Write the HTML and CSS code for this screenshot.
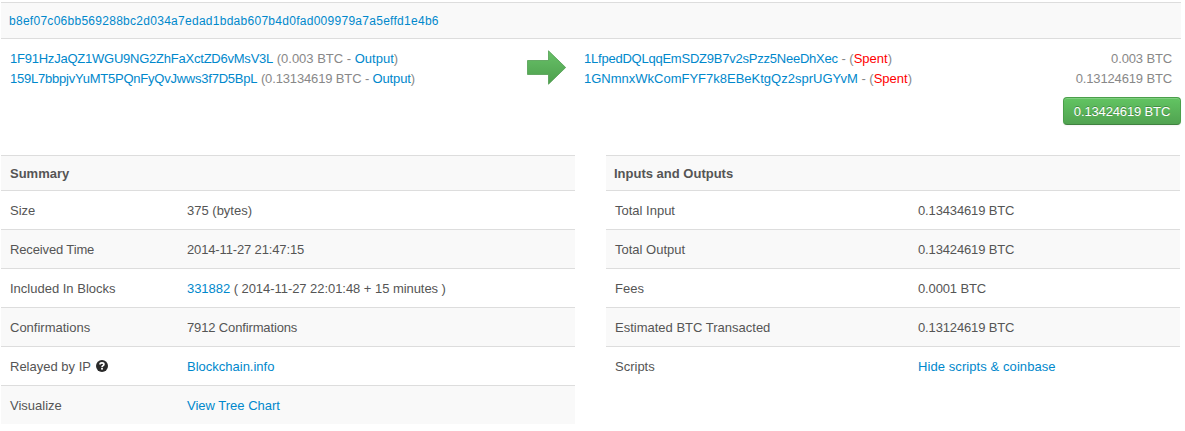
FILE: index.html
```html
<!DOCTYPE html>
<html lang="en">
<head>
<meta charset="utf-8">
<title>Transaction</title>
<link rel="stylesheet" href="styles.css">
</head>
<body>
<main class="page">
  <section class="tx">
    <div class="tx-hash"><a>b8ef07c06bb569288bc2d034a7edad1bdab607b4d0fad009979a7a5effd1e4b6</a></div>
    <div class="tx-body">
      <div class="inputs">
        <div><a class="address">1F91HzJaQZ1WGU9NG2ZhFaXctZD6vMsV3L</a> <span>(0.003 BTC - <a>Output</a>)</span></div>
        <div><a class="address">159L7bbpjvYuMT5PQnFyQvJwws3f7D5BpL</a> <span class="tight">(0.13134619 BTC - <a>Output</a>)</span></div>
      </div>
      <svg class="arrow" width="40" height="36" viewBox="0 0 40 36">
        <defs><linearGradient id="g" x1="0" y1="0" x2="0" y2="1"><stop offset="0" stop-color="#68c168"/><stop offset="1" stop-color="#4d9f4d"/></linearGradient></defs>
        <path d="M.5 10.500H21.500V.8L38.700 17.500 21.500 34.200V24.500H.5Z" fill="url(#g)" stroke="#4c9a4c" stroke-opacity=".75"/>
      </svg>
      <div class="outputs">
        <div class="out"><span><a class="address">1LfpedDQLqqEmSDZ9B7v2sPzz5NeeDhXec</a> - (<b class="spent">Spent</b>)</span><span class="tight">0.003 BTC</span></div>
        <div class="out"><span><a>1GNmnxWkComFYF7k8EBeKtgQz2sprUGYvM</a> - (<b class="spent">Spent</b>)</span><span class="tight">0.13124619 BTC</span></div>
      </div>
    </div>
    <div class="total"><button class="btn">0.13424619 BTC</button></div>
  </section>
  <section class="details">
    <div class="table summary">
      <div class="row head">Summary</div>
      <div class="row"><span>Size</span><span>375 (bytes)</span></div>
      <div class="row odd"><span class="tight">Received Time</span><span class="tight">2014-11-27 21:47:15</span></div>
      <div class="row"><span>Included In Blocks</span><span class="block"><a>331882</a> ( 2014-11-27 22:01:48 + 15 minutes )</span></div>
      <div class="row odd"><span>Confirmations</span><span class="tight">7912 Confirmations</span></div>
      <div class="row"><span>Relayed by IP <svg class="help" width="12" height="12" viewBox="0 0 12 12"><circle cx="6" cy="6" r="6" fill="#2a2a2a"/><path d="M4 4.500Q4.100 2.900 6 2.900T7.900 4.400C7.900 5.700 6 5.600 6 7.200" fill="none" stroke="#fff" stroke-width="1.700"/><rect x="5.100" y="8" width="1.800" height="1.600" fill="#fff"/></svg></span><span><a>Blockchain.info</a></span></div>
      <div class="row odd"><span>Visualize</span><span><a>View Tree Chart</a></span></div>
    </div>
    <div class="table io">
      <div class="row head">Inputs and Outputs</div>
      <div class="row"><span>Total Input</span><span class="tight">0.13434619 BTC</span></div>
      <div class="row odd"><span>Total Output</span><span class="tight">0.13424619 BTC</span></div>
      <div class="row"><span>Fees</span><span class="tight">0.0001 BTC</span></div>
      <div class="row odd"><span>Estimated BTC Transacted</span><span class="tight">0.13124619 BTC</span></div>
      <div class="row"><span>Scripts</span><span class="loose"><a>Hide scripts &amp; coinbase</a></span></div>
    </div>
  </section>
</main>
</body>
</html>
```
FILE: styles.css
```css
* { box-sizing: border-box; }
body { margin: 0; background: #fff; color: #555; font: 13px/20px "Liberation Sans", Arial, sans-serif; }
a { color: #08c; }
.page { width: 1181px; padding: 2px 0 0 1px; }
.tx-hash { height: 37px; padding: 8px; background: #f9f9f9; border-top: 1px solid #ddd; border-bottom: 1px solid #ddd; font-size: 12px; letter-spacing: .275px; }
.tx-body { display: flex; padding-top: 10px; color: #888; height: 48px; }
.inputs { width: 526px; padding-left: 9px; white-space: nowrap; }
.address { letter-spacing: -.23px; }
.tight { letter-spacing: -.14px; }
.loose { letter-spacing: .08px; }
.block { letter-spacing: -.05px; }
.arrow { flex: none; margin-top: 1px; }
.outputs { flex: 1; padding: 0 9px 0 17px; white-space: nowrap; }
.out { display: flex; justify-content: space-between; }
.spent { color: #f00; font-weight: normal; }
.total { display: flex; justify-content: flex-end; padding-top: 10px; }
.btn { width: 118px; height: 28px; padding: 1px 0 0; border: 1px solid #4a9f4a; border-bottom-color: #408140; border-radius: 4px; background: linear-gradient(#62c462, #51a351); box-shadow: inset 0 1px 0 rgba(255,255,255,.2), 0 1px 2px rgba(0,0,0,.05); color: #fff; font: inherit; letter-spacing: -.14px; text-shadow: 0 -1px 0 rgba(0,0,0,.25); }
.details { display: flex; gap: 31px; padding-top: 30px; }
.table { width: 574px; }
.row { display: flex; height: 39px; padding: 10px 9px 0; border-top: 1px solid #ddd; }
.row > span:first-child { width: 177px; }
.io .row > span:first-child { width: 303px; }
.head { height: 35px; padding-top: 8px; background: #f9f9f9; font-weight: bold; }
.io .head { padding-left: 8px; }
.odd { background: #f9f9f9; }
.help { margin-left: 2px; vertical-align: -1px; }
```
